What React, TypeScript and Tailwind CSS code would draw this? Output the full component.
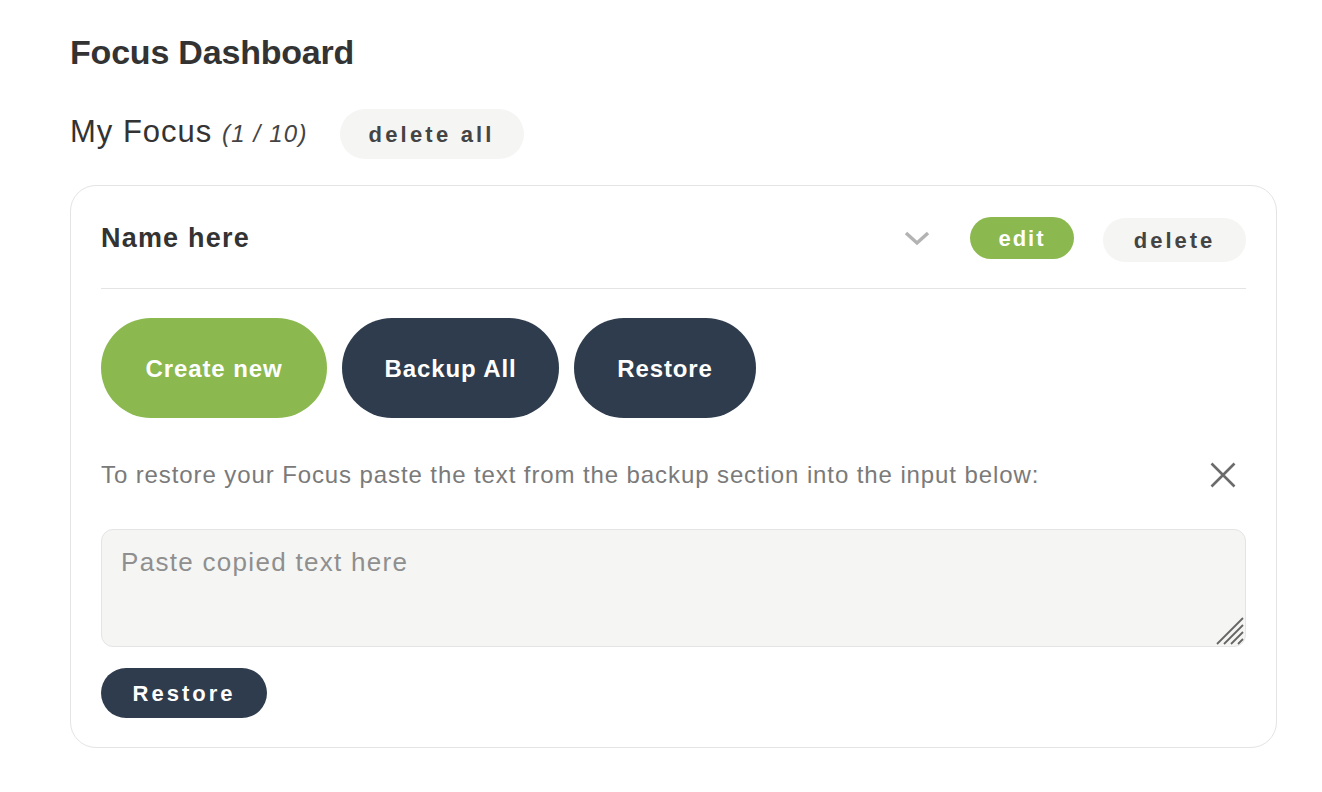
import React, { useState } from 'react';

const font = { fontFamily: '"Liberation Sans", Arial, sans-serif' };

function Chevron() {
  return (
    <svg width="26" height="16" viewBox="0 0 26 16" fill="none" className="text-[#b3b3b3]">
      <path d="M2 3l11 10L24 3" stroke="currentColor" strokeWidth="3.5" strokeLinecap="butt" />
    </svg>
  );
}

function CloseIcon() {
  return (
    <svg width="26" height="26" viewBox="0 0 26 26" fill="none" className="text-[#6b6b6b]">
      <path d="M1.5 1.5l23 23M24.5 1.5l-23 23" stroke="currentColor" strokeWidth="2.6" />
    </svg>
  );
}

function ResizeGrip() {
  return (
    <svg width="28" height="28" viewBox="0 0 28 28" fill="none" className="text-[#666]">
      <path d="M1 27L27 1M8 27L27 8M15 27L27 15M22 27L27 22" stroke="currentColor" strokeWidth="1.8" />
    </svg>
  );
}

export default function App() {
  const [text, setText] = useState('');

  return (
    <div className="min-h-screen bg-white text-[#333]" style={font}>
      <div className="pl-[70px] pr-[45px] pt-[32px]">
        <h1 className="text-[34px] font-bold leading-[40px] tracking-[-0.2px] text-[#333]">Focus Dashboard</h1>

        <div className="mt-[37px] flex items-center">
          <h2 className="-mt-[3px] text-[31px] leading-[40px] tracking-[1px] text-[#333]">
            My Focus <span className="italic text-[24px] tracking-[1.2px] text-[#444]">(1 / 10)</span>
          </h2>
          <button className="ml-[32px] h-[50px] w-[184px] rounded-full bg-[#f5f5f3] text-[22px] font-bold tracking-[3.2px] text-[#444]">
            delete all
          </button>
        </div>

        <div className="mt-[26px] rounded-[26px] border border-[#e4e4e4] px-[30px] pt-[30px] pb-[29px]">
          <div className="flex items-center h-[44px]">
            <span className="text-[27px] font-bold tracking-[1.2px] text-[#333]">Name here</span>
            <div className="ml-auto flex items-center">
              <Chevron />
              <button className="ml-[40px] h-[42px] w-[104px] rounded-full bg-[#8bb84f] text-[22px] font-bold tracking-[2px] text-white">
                edit
              </button>
              <button className="ml-[29px] mt-[4px] h-[44px] w-[143px] rounded-full bg-[#f5f5f3] text-[22px] font-bold tracking-[3px] text-[#444]">
                delete
              </button>
            </div>
          </div>

          <div className="mt-[28px] border-t border-[#e4e4e4]" />

          <div className="mt-[29px] flex gap-[15px]">
            <button className="h-[100px] w-[226px] rounded-full bg-[#8bb84f] pt-[2px] text-[24px] font-bold tracking-[0.9px] text-white">
              Create new
            </button>
            <button className="h-[100px] w-[217px] rounded-full bg-[#2f3c4d] pt-[2px] text-[24px] font-bold tracking-[0.9px] text-white">
              Backup All
            </button>
            <button className="h-[100px] w-[182px] rounded-full bg-[#2f3c4d] pt-[2px] text-[24px] font-bold tracking-[0.9px] text-white">
              Restore
            </button>
          </div>

          <div className="mt-[39px] flex items-center justify-between">
            <p className="text-[24px] leading-[36px] tracking-[0.9px] text-[#7a7a7a]">
              To restore your Focus paste the text from the backup section into the input below:
            </p>
            <span className="mr-[10px]"><CloseIcon /></span>
          </div>

          <div className="relative mt-[36px]">
            <textarea
              value={text}
              onChange={(e) => setText(e.target.value)}
              placeholder="Paste copied text here"
              className="block h-[118px] w-full resize-none rounded-[12px] border border-[#e4e4e4] bg-[#f5f5f3] px-[19px] pt-[16px] text-[26px] leading-[32px] tracking-[1.3px] text-[#333] placeholder:text-[#8f8f8f] outline-none"
              style={font}
            />
            <span className="pointer-events-none absolute right-[2px] bottom-[2px]"><ResizeGrip /></span>
          </div>

          <button className="mt-[21px] h-[50px] w-[166px] rounded-full bg-[#2f3c4d] text-[22px] font-bold tracking-[3px] text-white">
            Restore
          </button>
        </div>
      </div>
    </div>
  );
}
